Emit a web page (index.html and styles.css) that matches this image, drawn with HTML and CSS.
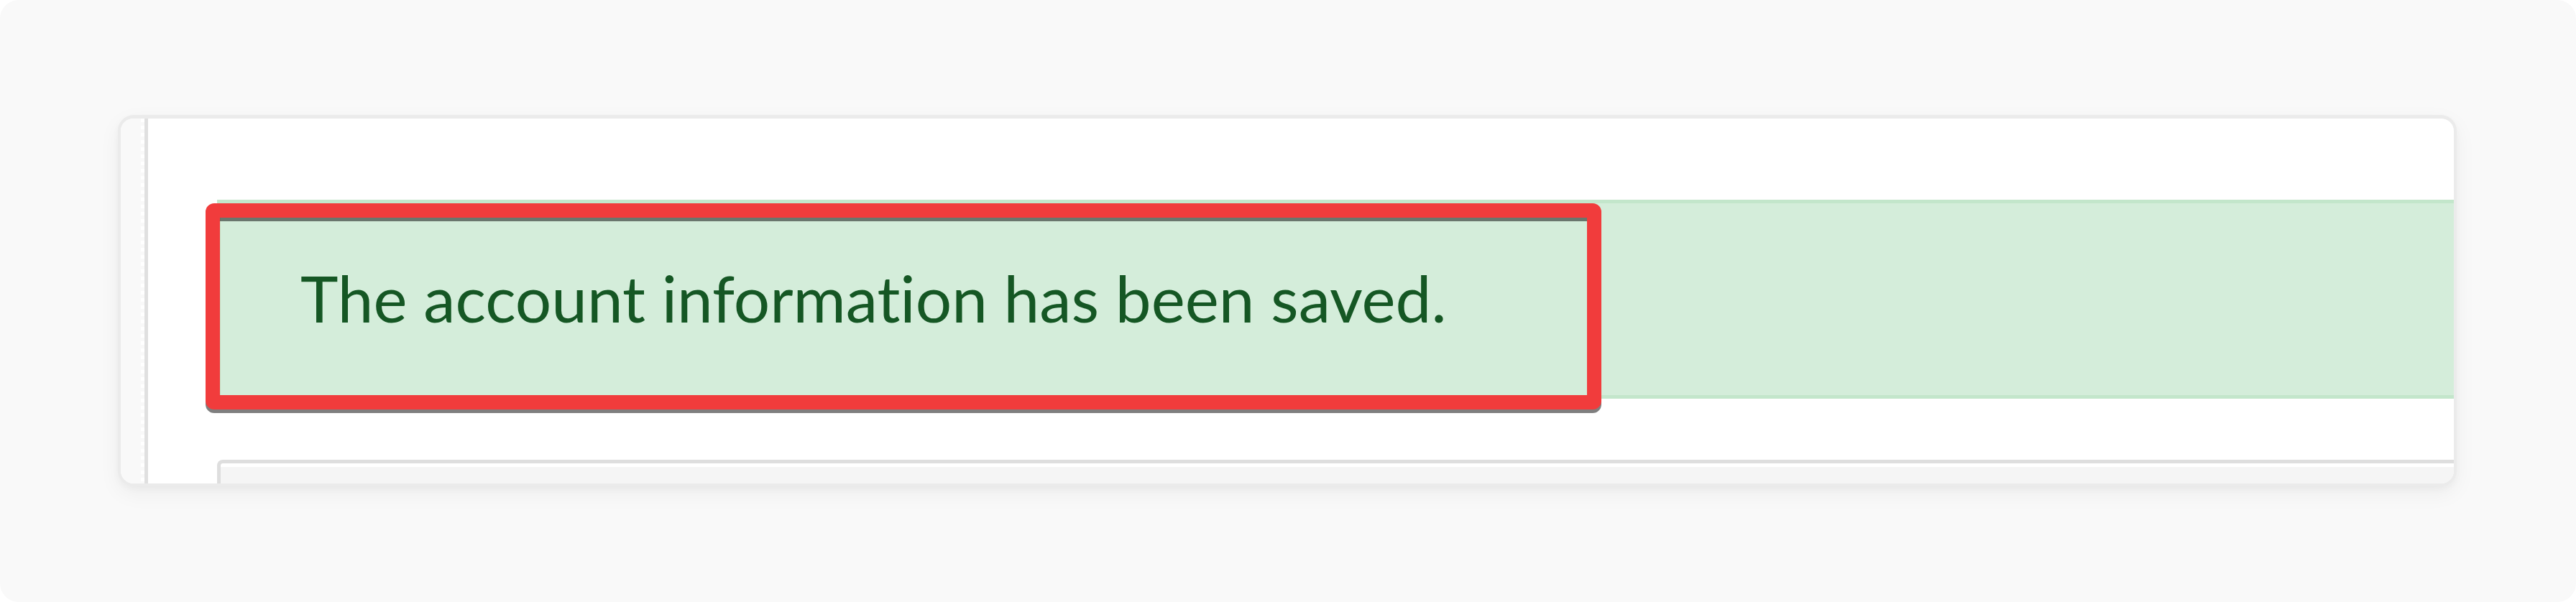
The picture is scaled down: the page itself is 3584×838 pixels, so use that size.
FILE: index.html
```html
<!DOCTYPE html>
<html lang="en">
<head>
<meta charset="utf-8">
<title>Account saved</title>
<link rel="stylesheet" href="styles.css">
</head>
<body>
<div class="page">
  <div class="card">
    <div class="rail"></div>
    <div class="content">
      <div class="alert">
        The account information has been saved.
        <div class="highlight"></div>
      </div>
      <div class="panel"></div>
    </div>
  </div>
</div>
</body>
</html>
```
FILE: styles.css
```css
html, body {
  margin: 0;
  padding: 0;
  background: #ffffff;
}
.page {
  box-sizing: border-box;
  width: 3584px;
  height: 838px;
  background: #f9f9f9;
  border-radius: 26px;
  padding: 160px 166px 0 164px;
}
.card {
  box-sizing: border-box;
  height: 517px;
  display: flex;
  background: #ffffff;
  border: 4px solid #ebebeb;
  border-top-width: 5px;
  border-radius: 22px;
  overflow: hidden;
  box-shadow: 0 10px 30px rgba(0, 0, 0, 0.05), 0 4px 10px rgba(0, 0, 0, 0.03);
}
.rail {
  flex: 0 0 33px;
  background:
    repeating-linear-gradient(to bottom, #ffffff 0 5px, #f9f9f9 5px 10px) right top / 5px 100% no-repeat,
    #f9f9f9;
  border-right: 5px solid #e0e0e0;
}
.content {
  flex: 1;
  display: flex;
  flex-direction: column;
  padding: 113px 0 0 96px;
  gap: 85px;
  min-width: 0;
}
.alert {
  position: relative;
  margin-right: -30px;
  background: #d4edda;
  border: 5px solid #c3e6cb;
  color: #155724;
  font-family: Lato, "Open Sans", sans-serif;
  font-size: 89px;
  line-height: 120px;
  font-variant-ligatures: none;
  font-feature-settings: "liga" 0, "clig" 0, "dlig" 0;
  padding: 72px 0 75px 111px;
  white-space: nowrap;
}
.highlight {
  position: absolute;
  left: -21px;
  top: 0;
  width: 1942px;
  height: 287px;
  box-sizing: border-box;
  border: 20px solid #f13c3c;
  border-radius: 12px;
  filter: drop-shadow(0 5px 0 rgba(0, 0, 0, 0.5));
}
.panel {
  flex: 0 0 60px;
  margin-right: -30px;
  border: 5px solid #dedede;
  border-bottom: none;
  border-right: none;
  border-top-left-radius: 8px;
  background: linear-gradient(to bottom, #ffffff 0 5px, #f5f5f5 5px);
}
```
